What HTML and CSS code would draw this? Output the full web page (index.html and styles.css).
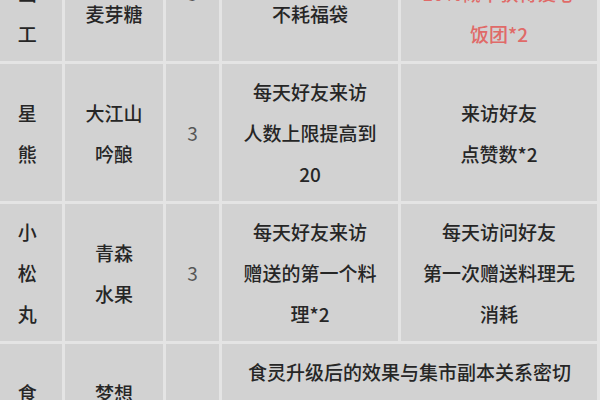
FILE: index.html
```html
<!DOCTYPE html>
<html lang="zh-CN">
<head>
<meta charset="utf-8">
<link rel="stylesheet" href="styles.css">
</head>
<body>
<div class="viewport">
  <table class="grid">
    <colgroup>
      <col class="c1"><col class="c2"><col class="c3"><col class="c4"><col class="c5">
    </colgroup>
    <tbody>
      <tr>
        <td>甜<br>画<br>工</td>
        <td>蜂蜜<br>麦芽糖</td>
        <td class="num">3</td>
        <td>收获时有几率<br>不耗福袋</td>
        <td class="red">每天第一次探索<br>10%概率获得爱心<br>饭团*2</td>
      </tr>
      <tr>
        <td>星<br>熊</td>
        <td>大江山<br>吟酿</td>
        <td class="num">3</td>
        <td>每天好友来访<br>人数上限提高到<br>20</td>
        <td>来访好友<br>点赞数*2</td>
      </tr>
      <tr>
        <td>小<br>松<br>丸</td>
        <td>青森<br>水果</td>
        <td class="num">3</td>
        <td>每天好友来访<br>赠送的第一个料<br>理*2</td>
        <td>每天访问好友<br>第一次赠送料理无<br>消耗</td>
      </tr>
      <tr>
        <td>食<br>灵<br>名</td>
        <td>梦想<br>之星<br>料理</td>
        <td class="num">3</td>
        <td colspan="2">食灵升级后的效果与集市副本关系密切<br>玩家可以根据自己的需要<br>选择合适的食灵进行培养<br>提升集市收益</td>
      </tr>
    </tbody>
  </table>
</div>
</body>
</html>
```
FILE: styles.css
```css
html, body {
  margin: 0;
  padding: 0;
  background: #e4e4e4;
}
.viewport {
  width: 600px;
  height: 400px;
  overflow: hidden;
}
.grid {
  margin: -79px 0 0 -11px;
  border-collapse: separate;
  border-spacing: 3px;
  table-layout: fixed;
  width: 611px;
  background: #e4e4e4;
  font-family: "Noto Sans CJK SC", "Noto Sans", sans-serif;
  font-size: 19px;
  font-weight: 500;
  line-height: 41px;
  color: #262626;
}
.c1 { width: 70px; }
.c2 { width: 97px; }
.c3 { width: 53px; }
.c4 { width: 175px; }
.c5 { width: 195px; }
.grid td {
  background: #d2d2d2;
  padding: 7px 0;
  text-align: center;
  vertical-align: middle;
  white-space: nowrap;
  overflow: hidden;
}
.grid td.num {
  color: #555;
  font-weight: 400;
}
.grid td.red {
  color: #e06a68;
}
```
